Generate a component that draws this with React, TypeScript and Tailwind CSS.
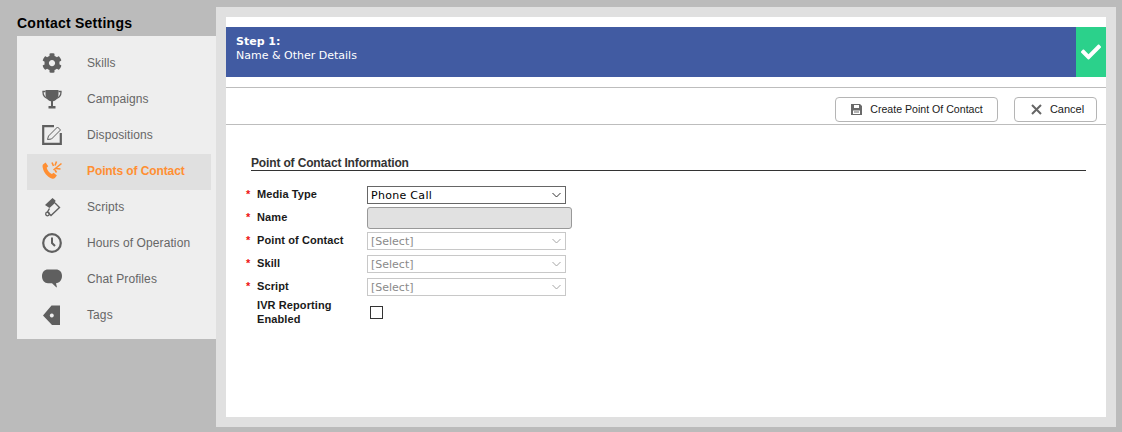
import { FaCog, FaCheck } from 'react-icons/fa';

function TrophyIcon() {
  return (
    <svg width="20" height="20" viewBox="0 0 20 20">
      <path d="M3.500 2.500H1c-.2 3.500 2.200 6.500 5.500 7.500M16.500 2.500H19c.2 3.500-2.200 6.500-5.500 7.500" fill="none" stroke="#5f5f5f" strokeWidth="1.300" />
      <path d="M3.500 1h13v4c0 4-2.500 6.500-5.500 7.300V17h2.500v2.500h-7V17H9v-4.700C6 11.500 3.500 9 3.500 5z" fill="#5f5f5f" />
    </svg>
  );
}

function EditIcon() {
  return (
    <svg width="20" height="20" viewBox="0 0 20 20">
      <path d="M12 1.200H1.200v17.600h17.600V8" fill="none" stroke="#5f5f5f" strokeWidth="2.200" />
      <path d="M5.500 14.500l1-3.500 9-9 3 3-9 9z" fill="#eeeeee" stroke="#5f5f5f" strokeWidth="1" />
    </svg>
  );
}

function PhoneIcon() {
  return (
    <svg width="20" height="20" viewBox="0 0 20 20" fill="#ff8f33">
      <path d="M1 3.500 3.600 1.600l2.600 3.600-1.500 1.600c.7 2.600 2.600 5 5.200 6.300l1.700-1.400 3.300 2.900-2 2.300c-.9.900-2 1-3.200.500C5 15.600 1.800 11.600.7 6.400.5 5.200.5 4.300 1 3.500z" />
      <path d="M10 1.500l1.500 3.500M14.500.5l-1.500 4M19.500 2.500l-8 6.500M14 7.500l4.500.5M13 9l1.500 2.500" fill="none" stroke="#ff8f33" strokeWidth="1.600" />
    </svg>
  );
}

function ScriptIcon() {
  return (
    <svg width="20" height="20" viewBox="0 0 20 20">
      <path d="M3 8l7.500-7 3 2.500-.5 2.500-5.500 5z" fill="#5f5f5f" />
      <path d="M13 6l4.500 4.500L9 18.500l-3.500-3.500L7.500 11.500" fill="none" stroke="#5f5f5f" strokeWidth="1.400" />
      <circle cx="5.500" cy="17" r="1.800" fill="none" stroke="#5f5f5f" strokeWidth="1.300" />
    </svg>
  );
}

function ClockIcon() {
  return (
    <svg width="20" height="20" viewBox="0 0 20 20" fill="none" stroke="#5f5f5f">
      <circle cx="10" cy="10" r="8.800" strokeWidth="2.200" />
      <path d="M10 4.500v5.500l3 3" strokeWidth="2" />
    </svg>
  );
}

function ChatIcon() {
  return (
    <svg width="20" height="20" viewBox="0 0 20 20" fill="#5f5f5f">
      <path d="M6 .5h8c3.500 0 6 2.300 6 6.500 0 4-2.500 7-6 7.200l1 4.300-1-.500-4-3.800H6c-3.500 0-6-3-6-7C0 3 2.500.5 6 .5z" />
    </svg>
  );
}

function TagIcon() {
  return (
    <svg width="20" height="20" viewBox="0 0 20 20" fill="#5f5f5f">
      <path fillRule="evenodd" d="M18 .5V20H10L1 10.500 9.500.5zM9.800 8.500a2 2 0 1 0 .01 0z" />
    </svg>
  );
}

function SaveIcon() {
  return (
    <svg width="11" height="11" viewBox="0 0 11 11" fill="#6a6a6a">
      <path fillRule="evenodd" d="M0 0h9l2 2v9H0zM3 1v3h5V1zM2 6.500V10h7V6.500z" />
      <rect x="3" y="7.500" width="5" height="1" />
    </svg>
  );
}

const menu = [
  { label: 'Skills', icon: <FaCog size={20} color="#5f5f5f" /> },
  { label: 'Campaigns', icon: <TrophyIcon /> },
  { label: 'Dispositions', icon: <EditIcon /> },
  { label: 'Points of Contact', icon: <PhoneIcon />, active: true },
  { label: 'Scripts', icon: <ScriptIcon /> },
  { label: 'Hours of Operation', icon: <ClockIcon /> },
  { label: 'Chat Profiles', icon: <ChatIcon /> },
  { label: 'Tags', icon: <TagIcon /> },
];

function Chevron({ color }: { color: string }) {
  return (
    <svg width="9" height="6" viewBox="0 0 9 6" fill="none" stroke={color} strokeWidth="1">
      <path d="M.5 1l4 4 4-4" />
    </svg>
  );
}

function FieldLabel({ children }: { children: string }) {
  return (
    <div className="flex w-[121px] shrink-0 -translate-y-[1px] items-center text-[11px] font-bold tracking-[0.1px] text-[#1a1a1a]">
      <span className="w-[11px] text-[#e11]">*</span>
      <span>{children}</span>
    </div>
  );
}

function DisabledSelect() {
  return (
    <div className="flex h-[18px] w-[199px] items-center justify-between border border-[#c8c8c8] pl-[3px] pr-[4px] font-['DejaVu_Sans'] text-[11px] text-[#8a8a8a]">
      <span className="pt-[2px]">[Select]</span>
      <Chevron color="#a5a5a5" />
    </div>
  );
}

export default function App() {
  return (
    <div className="flex h-[432px] w-[1122px] overflow-hidden bg-[#bbbbbb] font-['Liberation_Sans',sans-serif]">
      {/* Sidebar */}
      <div className="w-[216px] shrink-0 pl-[17px]">
        <h2 className="flex h-[36px] items-end pb-[5px] text-[14px] font-bold leading-[16px] tracking-[0.25px] text-black">Contact Settings</h2>
        <div className="h-[303px] bg-[#eeeeee] pb-[5px] pl-[10px] pr-[5px] pt-[10px]">
          {menu.map((m) => (
            <div
              key={m.label}
              className={`flex h-[36px] items-center pb-[2px] pl-[15px] text-[12px] ${
                m.active ? 'bg-[#e0e0e0] font-bold tracking-[-0.1px] text-[#ff8f33]' : 'tracking-[0.1px] text-[#666666]'
              }`}
            >
              <span className="flex w-[45px] shrink-0">{m.icon}</span>
              <span>{m.label}</span>
            </div>
          ))}
        </div>
      </div>

      {/* Main panel */}
      <div className="mt-[7px] h-[420px] w-[900px] bg-[#e0e0e0] p-[10px]">
        <div className="h-[400px] bg-white pt-[10px]">
          <div className="flex h-[50px] bg-[#415ba2]">
            <div className="flex-1 pl-[10px] pt-[8px] font-['DejaVu_Sans'] text-[11px] leading-[14px] text-white">
              <div className="font-bold">Step 1:</div>
              <div>Name &amp; Other Details</div>
            </div>
            <div className="flex w-[30px] items-center justify-center bg-[#2bd18b]">
              <FaCheck size={20} color="#fff" />
            </div>
          </div>

          <div className="mt-[10px] flex h-[38px] items-end justify-end gap-[16px] border-y border-[#bdbdbd] pb-[2px] pr-[9px]">
            <button className="flex h-[25px] w-[163px] items-center justify-center gap-[8px] rounded-[4px] border border-[#b5b5b5] bg-white pl-[1px] text-[10.6px] text-[#1a1a1a]">
              <SaveIcon />
              <span>Create Point Of Contact</span>
            </button>
            <button className="flex h-[25px] w-[83px] items-center justify-center gap-[8px] rounded-[4px] border border-[#b5b5b5] bg-white pl-[4px] text-[11px] text-[#1a1a1a]">
              <svg width="11" height="11" viewBox="0 0 11 11" stroke="#666666" strokeWidth="2">
                <path d="M1 1l9 9M10 1l-9 9" />
              </svg>
              <span>Cancel</span>
            </button>
          </div>

          {/* Form */}
          <div className="pl-[20px] pr-[20px] pt-[31px]">
            <div className="ml-[5px] h-[15px] border-b border-[#333333] text-[12px] font-bold leading-[14px] tracking-[-0.15px] text-[#333333]">
              Point of Contact Information
            </div>
            <div className="mt-[15px] flex flex-col gap-[5px]">
              <div className="flex h-[18px] items-center">
                <FieldLabel>Media Type</FieldLabel>
                <div className="flex h-[18px] w-[199px] items-center justify-between border border-[#666666] pl-[3px] pr-[4px] font-['DejaVu_Sans'] text-[11px] tracking-[0.3px] text-black">
                  <span className="pt-[2px]">Phone Call</span>
                  <Chevron color="#333333" />
                </div>
              </div>
              <div className="flex h-[18px] items-center">
                <FieldLabel>Name</FieldLabel>
                <div className="h-[22px] w-[205px] rounded-[3px] border border-[#999999] bg-[#e1e1e1]" />
              </div>
              <div className="flex h-[18px] items-center">
                <FieldLabel>Point of Contact</FieldLabel>
                <DisabledSelect />
              </div>
              <div className="flex h-[18px] items-center">
                <FieldLabel>Skill</FieldLabel>
                <DisabledSelect />
              </div>
              <div className="flex h-[18px] items-center">
                <FieldLabel>Script</FieldLabel>
                <DisabledSelect />
              </div>
              <div className="-mt-[3px] flex items-center pl-[11px]">
                <div className="w-[113px] shrink-0 text-[11px] font-bold leading-[14px] tracking-[0.1px] text-[#1a1a1a]">
                  IVR Reporting
                  <br />
                  Enabled
                </div>
                <div className="h-[13px] w-[13px] border border-[#333333] bg-white" />
              </div>
            </div>
          </div>
        </div>
      </div>
    </div>
  );
}
